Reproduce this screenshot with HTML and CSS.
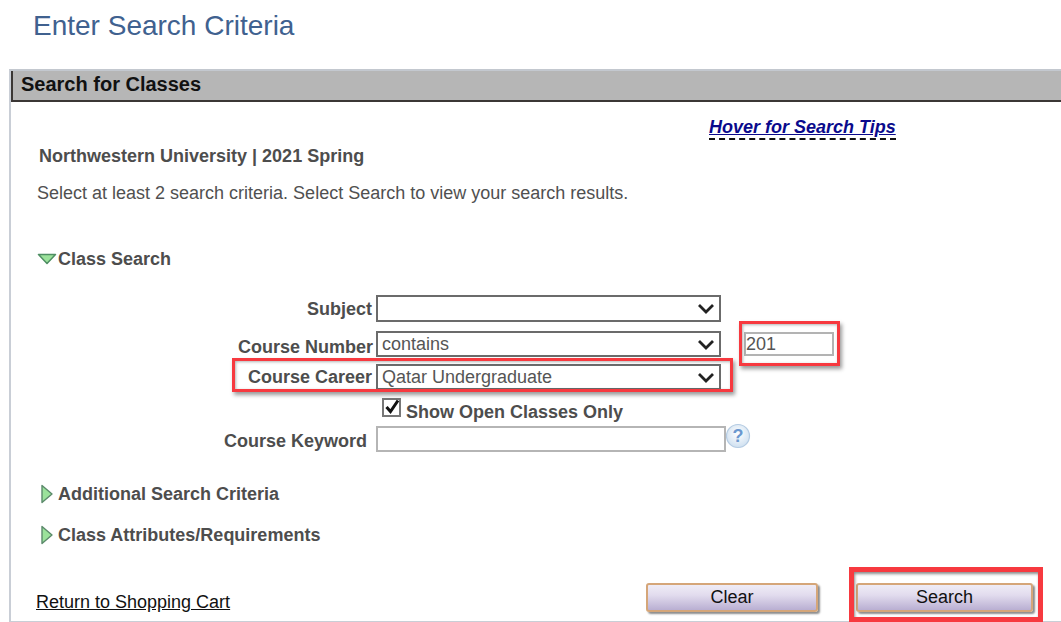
FILE: index.html
```html
<!DOCTYPE html>
<html lang="en">
<head>
<meta charset="utf-8">
<title>Enter Search Criteria</title>
<link rel="stylesheet" href="styles.css">
</head>
<body>
<div class="page">
  <h1 class="title">Enter Search Criteria</h1>
  <section class="panel">
    <h2 class="panel-head">Search for Classes</h2>
    <div class="panel-body">
      <div class="tips-row"><a class="tips" href="#">Hover for Search Tips</a></div>
      <div class="term">Northwestern University | 2021 Spring</div>
      <p class="intro">Select at least 2 search criteria. Select Search to view your search results.</p>
      <div class="group group-open">
        <svg class="tri-down" width="20" height="12" viewBox="0 0 20 12"><path d="M1.5 1.5H18.5L10 10.5Z" fill="#9be29b" stroke="#4f8f63" stroke-width="1.5" stroke-linejoin="round"/></svg>
        <span>Class Search</span>
      </div>
      <div class="form">
        <div class="row row-subject">
          <label class="lab">Subject</label>
          <div class="sel" role="combobox"><span></span><svg width="18" height="11" viewBox="0 0 18 11"><path d="M2 2L9 9L16 2" fill="none" stroke="#222" stroke-width="2.8"/></svg></div>
        </div>
        <div class="row row-number">
          <label class="lab">Course Number</label>
          <div class="sel" role="combobox"><span>contains</span><svg width="18" height="11" viewBox="0 0 18 11"><path d="M2 2L9 9L16 2" fill="none" stroke="#222" stroke-width="2.8"/></svg></div>
          <input class="num" type="text" value="201">
        </div>
        <div class="row row-career">
          <label class="lab">Course Career</label>
          <div class="sel" role="combobox"><span>Qatar Undergraduate</span><svg width="18" height="11" viewBox="0 0 18 11"><path d="M2 2L9 9L16 2" fill="none" stroke="#222" stroke-width="2.8"/></svg></div>
        </div>
        <div class="row row-check">
          <span class="box"><svg width="18" height="18" viewBox="0 0 18 18"><path d="M3.5 9L7.5 13.5L15 2.5" fill="none" stroke="#111" stroke-width="3"/></svg></span>
          <span class="check-label">Show Open Classes Only</span>
        </div>
        <div class="row row-keyword">
          <label class="lab lab-keyword">Course Keyword</label>
          <input class="kw" type="text">
          <svg class="help" width="26" height="26" viewBox="0 0 26 26"><defs><radialGradient id="hg" cx="50%" cy="40%" r="60%"><stop offset="0" stop-color="#fff"/><stop offset="1" stop-color="#cfe0f0"/></radialGradient></defs><circle cx="13" cy="13" r="11.5" fill="url(#hg)" stroke="#b4cbe2" stroke-width="1.2"/><text x="13" y="19" text-anchor="middle" class="help-q">?</text></svg>
        </div>
      </div>
      <div class="group group-add">
        <svg width="14" height="20" viewBox="0 0 14 20"><path d="M2 1.5V18.5L12 10Z" fill="#9be29b" stroke="#5b8a6b" stroke-width="1.4" stroke-linejoin="round"/></svg>
        <span>Additional Search Criteria</span>
      </div>
      <div class="group group-attr">
        <svg width="14" height="20" viewBox="0 0 14 20"><path d="M2 1.5V18.5L12 10Z" fill="#9be29b" stroke="#5b8a6b" stroke-width="1.4" stroke-linejoin="round"/></svg>
        <span>Class Attributes/Requirements</span>
      </div>
      <div class="actions">
        <a class="back" href="#">Return to Shopping Cart</a>
        <button class="btn btn-clear" type="button">Clear</button>
        <button class="btn btn-search" type="button">Search</button>
      </div>
    </div>
  </section>
  <div class="mark mark-num"></div>
  <div class="mark mark-career"></div>
  <div class="mark mark-search"></div>
</div>
</body>
</html>
```
FILE: styles.css
```css
* { box-sizing: border-box; }
html, body { margin: 0; padding: 0; background: #fff; }
body { font-family: "Liberation Sans", Arial, sans-serif; color: #4d4d4d; }
.page { position: relative; width: 1061px; height: 622px; overflow: hidden; }
.title { margin: 0; padding: 11px 0 0 33px; height: 69px; font-size: 28px; line-height: 30px; font-weight: normal; color: #40618f; }
.panel { margin-left: 9px; height: 553px; border-top: 2px solid #c3c8cf; border-left: 2px solid #c9ced6; border-bottom: 1px solid #c9ced6; }
.panel-head { margin: 0; height: 31px; padding: 1px 0 0 8px; background: #b6b6b6; border-left: 2px solid #3b3735; border-bottom: 2px solid #3b3735; font-size: 20px; line-height: 25px; font-weight: bold; color: #111; }
.panel-body { display: flex; flex-direction: column; height: 519px; }
.tips-row { height: 37px; padding: 15px 0 0 698px; }
.tips { display: inline-block; font-size: 18px; line-height: 20px; font-weight: bold; font-style: italic; color: #0a0a8c; text-decoration: underline; border-bottom: 2px dashed #111; height: 23px; }
.term { margin: 0 0 0 28px; padding-top: 7px; height: 32px; font-size: 18px; line-height: 20px; font-weight: bold; }
.intro { margin: 0 0 0 26px; padding-top: 12px; height: 39px; font-size: 18px; line-height: 20px; color: #505050; }
.group { display: flex; align-items: center; font-size: 18px; font-weight: bold; color: #4d4d4d; line-height: 20px; }
.group-open { margin: 32px 0 0 26px; height: 33px; padding-top: 0; }
.group-add { margin: 31px 0 0 29px; height: 22px; gap: 4px; }
.group-attr { margin: 19px 0 0 29px; height: 22px; gap: 4px; }
.group-add svg, .group-attr svg { flex: none; }
.tri-down { margin-right: 1px; flex: none; }
.form { margin-top: 20px; display: flex; flex-direction: column; }
.row { display: flex; align-items: center; }
.lab { width: 365px; text-align: right; font-size: 18px; font-weight: bold; line-height: 20px; color: #4d4d4d; flex: none; padding-right: 4px; }
.sel { width: 345px; display: flex; align-items: center; justify-content: space-between; border: 2px solid #6b6b6b; padding: 0 4px 0 4px; font-size: 18px; color: #555; background: #fff; flex: none; }
.row-subject { height: 27px; }
.row-subject .sel { height: 27px; }
.row-number { height: 26px; margin-top: 9px; }
.row-number .sel { height: 26px; }
.row-number .lab { padding-top: 5px; padding-right: 3px; }
.row-career { height: 26px; margin-top: 7px; }
.row-career .sel { height: 26px; }
.sel svg { flex: none; }
.num { width: 90px; height: 24px; margin: 0 0 0 23px; border: 2px solid #b3b3b3; padding: 0; font: 18px "Liberation Sans", Arial, sans-serif; color: #555; outline: none; }
.row-check { height: 19px; margin-top: 8px; padding-left: 371px; }
.box { width: 19px; height: 19px; border: 2px solid #777; background: #fff; display: flex; flex: none; overflow: visible; }
.box svg { margin: -2px 0 0 -1px; flex: none; }
.check-label { margin-left: 5px; font-size: 18px; font-weight: bold; line-height: 20px; position: relative; top: 4px; }
.row-keyword { height: 26px; margin-top: 9px; }
.lab-keyword { width: 365px; padding: 4px 9px 0 0; }
.kw { width: 350px; height: 26px; margin: 0; border: 2px solid #b5b5b5; outline: none; background: #fff; }
.help { flex: none; margin: -6px 0 0 -1px; }
.help-q { font: bold 18px "Liberation Sans", Arial, sans-serif; fill: #6b98cf; }
.actions { display: flex; align-items: flex-start; margin-top: 37px; position: relative; }
.back { margin: 8px 0 0 25px; width: 610px; font-size: 18px; line-height: 22px; color: #111; text-decoration: underline; flex: none; }
.btn { height: 29px; border: 2px solid #d5a679; border-radius: 3px; background: linear-gradient(#efecf6, #e2dcee 40%, #b9afd2); box-shadow: 2px 2px 2px #8d8d8d; font: 18px "Liberation Sans", Arial, sans-serif; color: #111; padding: 0; flex: none; }
.btn-clear { width: 172px; }
.btn-search { width: 177px; margin-left: 38px; }
.mark { position: absolute; border-style: solid; border-color: #f7393f; box-shadow: 2px 3px 4px rgba(0,0,0,.4), inset 1px 1px 3px rgba(0,0,0,.3); }
.mark-num { left: 739px; top: 321px; width: 101px; height: 45px; border-width: 3px; }
.mark-career { left: 232px; top: 358px; width: 501px; height: 34px; border-width: 3px; }
.mark-search { left: 849px; top: 567px; width: 194px; height: 55px; border-width: 5px; box-shadow: inset 1px 2px 3px rgba(0,0,0,.45); }
```
